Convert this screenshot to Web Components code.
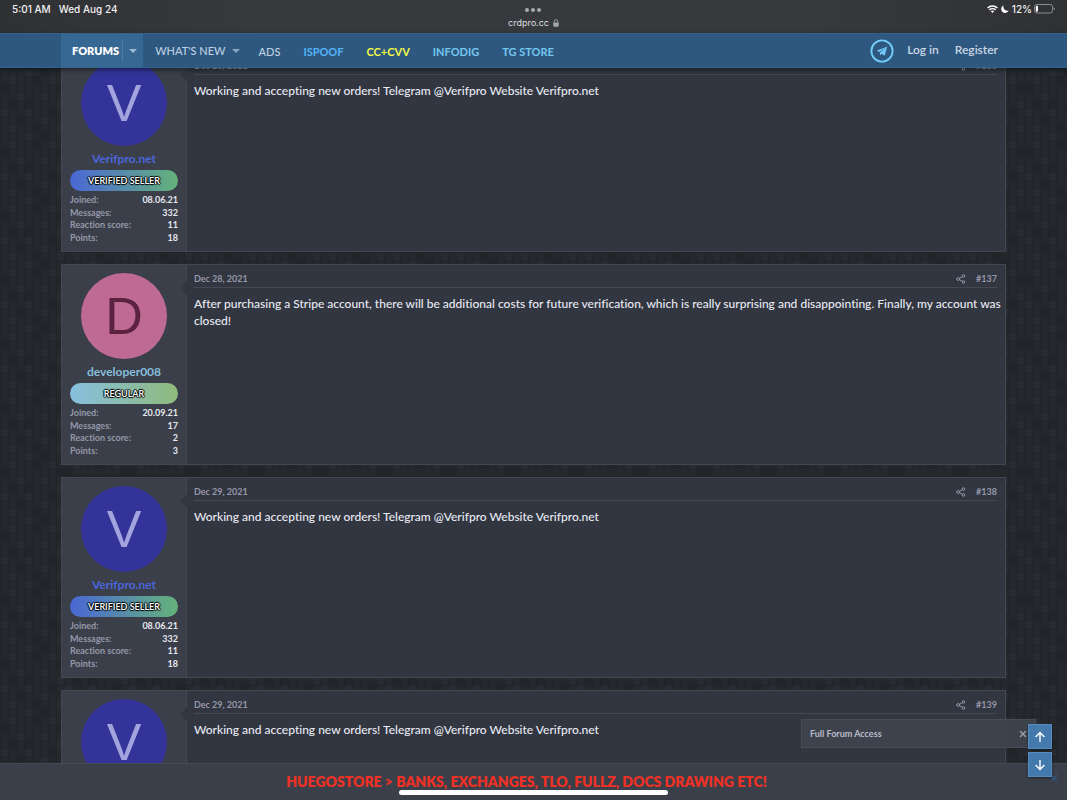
<!DOCTYPE html>
<html lang="en">
<head>
<meta charset="utf-8">
<meta name="viewport" content="width=device-width, initial-scale=1">
<title>Forum thread</title>
<style>
  html, body { margin: 0; height: 100%; }
  body { font-family: Lato, "Open Sans", sans-serif; font-variant-ligatures: none; background: #23272c; color: #e1e3ee; overflow: hidden; }
</style>
</head>
<body>
<forum-app></forum-app>

<script>
const define = (name, html, setup) => {
  const tpl = document.createElement('template');
  tpl.innerHTML = html;
  customElements.define(name, class extends HTMLElement {
    constructor() {
      super();
      this.attachShadow({ mode: 'open' }).append(tpl.content.cloneNode(true));
    }
    connectedCallback() { if (setup) setup(this, this.shadowRoot); }
  });
};

define('status-bar', `
<style>
  :host { display: grid; grid-template-columns: 1fr auto 1fr; height: 33px; box-sizing: border-box; padding: 0 12px;
    background: linear-gradient(90deg, #303133, #38393d 25%, #38393d 75%, #303133); color: #f1f1f2;
    font: 500 10px/18px Inter, sans-serif; }
  .left, .right { display: flex; align-items: center; height: 18px; }
  .left { gap: 8px; }
  .right { justify-content: flex-end; gap: 3px; }
  .right span { margin-right: -1px; }
  .mid { display: flex; flex-direction: column; align-items: center; gap: 5px; padding-top: 8px; }
  .dots { display: flex; gap: 2px; }
  .dots i { width: 4px; height: 4px; border-radius: 50%; background: #a9aaac; }
  .url { display: flex; align-items: center; gap: 4px; font-size: 9px; font-weight: 400; line-height: 11px; color: #dedfe1; }
  svg { display: block; }
</style>
<div class="left"><span>5:01 AM</span><span>Wed Aug 24</span></div>
<div class="mid">
  <div class="dots"><i></i><i></i><i></i></div>
  <div class="url"><span>crdpro.cc</span>
    <svg width="6" height="8" viewBox="0 0 6 8"><path d="M1.3 4V2.4a1.7 1.7 0 0 1 3.4 0V4" fill="none" stroke="#98999c"/><rect x="0.3" y="3.4" width="5.4" height="4.4" rx="0.8" fill="#a4a5a8"/></svg>
  </div>
</div>
<div class="right">
  <svg width="11" height="8" viewBox="0 0 11 8" fill="none" stroke="#fff" stroke-width="1.5"><path d="M0.6 3a7 7 0 0 1 9.8 0M2.4 4.9a4.5 4.5 0 0 1 6.2 0"/><path d="M5.5 7.9 3.9 6.3a2.3 2.3 0 0 1 3.2 0z" fill="#fff" stroke="none"/></svg>
  <svg width="8" height="8" viewBox="0 0 8 8"><path d="M2.6.2A4 4 0 1 0 7.8 5.6 4.2 4.2 0 0 1 2.6.2z" fill="#fff"/></svg>
  <span>12%</span>
  <svg width="21" height="10" viewBox="0 0 21 10"><rect x="0.5" y="0.5" width="18" height="8.5" rx="2.4" fill="none" stroke="#8b8c8f"/><rect x="1.8" y="1.8" width="2.2" height="6" rx="1" fill="#fff"/><path d="M19.6 3.3q1.3.5 1.3 1.5t-1.3 1.5z" fill="#8b8c8f"/></svg>
</div>`);

define('nav-tab', `
<style>
  :host { display: flex; align-items: stretch; }
  a { display: flex; align-items: center; color: var(--tab-color, #bfd0e0); text-decoration: none;
      font-size: 11px; font-weight: var(--tab-weight, 700); line-height: 16px; white-space: nowrap; }
  button { display: none; align-items: center; justify-content: center; border: 0; padding: 0; background: none; color: #84a6c1; }
  :host([menu]) button { display: flex; width: 21px; }
  :host([active]) a { padding-right: 3px; }
  :host([active]) { background: #376793; padding-left: 11px; }
  :host([active]) button { box-shadow: inset 1px 0 #4f7ba3; margin: 5px 0; color: #9dbbd3; }
</style>
<a href="#"><slot></slot></a>
<button type="button" aria-label="Open menu"><svg width="8" height="4" viewBox="0 0 8 4"><path d="M0 0h8L4 4z" fill="currentColor"/></svg></button>`);

define('site-nav', `
<style>
  :host { display: flex; height: 35px; box-sizing: border-box; padding: 0 69px 0 61px; background: #2e5880;
    border-top: 1px solid #33628f; border-bottom: 1px solid #34628c; box-shadow: 0 2px 5px rgba(0,0,0,.45); position: relative; z-index: 1; }
  nav { display: flex; }
  .main { gap: 12px; }
  .extra { gap: 23px; padding: 2px 0 0 12px; }
  .user { margin-left: auto; gap: 16px; }
  .user a { display: flex; align-items: center; color: #c9d7e4; text-decoration: none; font-size: 12px; font-weight: 600; padding-bottom: 3px; }
  .user a.tg { padding: 0; margin-right: -3px; }
  .plain { --tab-weight: 500; }
  .blue { --tab-color: #53b5f7; }
  .yellow { --tab-color: #f3f943; }
  .cyan { --tab-color: #74c8f0; }
  .act { --tab-color: #fff; --tab-weight: 800; }
</style>
<nav class="main" aria-label="Main">
  <nav-tab class="act" active menu>FORUMS</nav-tab>
  <nav-tab class="plain" menu>WHAT'S NEW</nav-tab>
</nav>
<nav class="extra" aria-label="Partners">
  <nav-tab class="plain">ADS</nav-tab>
  <nav-tab class="blue">ISPOOF</nav-tab>
  <nav-tab class="yellow">CC+CVV</nav-tab>
  <nav-tab class="cyan">INFODIG</nav-tab>
  <nav-tab class="cyan">TG STORE</nav-tab>
</nav>
<nav class="user" aria-label="Account">
  <a class="tg" href="#" aria-label="Telegram"><svg width="24" height="24" viewBox="0 0 24 24"><circle cx="12" cy="12" r="10.6" fill="none" stroke="#70cbf7" stroke-width="1.9"/><path d="M17.3 7.5 6.6 11.7l2.7 1.3zM17.3 7.5l-7.4 6 .1 3 1.6-1.8 3 2z" fill="#70cbf7"/></svg></a>
  <a href="#">Log in</a>
  <a href="#">Register</a>
</nav>`);

define('user-avatar', `
<style>
  :host { display: flex; align-items: center; justify-content: center; width: 86px; height: 86px; border-radius: 50%;
    background: var(--avatar-bg, #333399); color: var(--avatar-fg, #a3a3dd);
    font: 400 52px/86px "Liberation Sans", Arial, sans-serif; }
</style>
<slot></slot>`);

define('rank-badge', `
<style>
  :host { display: block; width: 100%; height: 21px; border-radius: 11px; text-align: center;
    background: linear-gradient(90deg, var(--rank-from, #4a67d6), var(--rank-to, #64b27b));
    font-size: 9px; font-weight: 600; line-height: 21px; color: #fff;
    text-shadow: 1px 0 1px #000, -1px 0 1px #000, 0 1px 1px #000, 0 -1px 1px #000; }
</style>
<slot></slot>`);

define('forum-post', `
<style>
  :host { display: grid; grid-template-columns: 125px 1fr; box-sizing: border-box; min-height: 201px; flex: none;
    border: 1px solid #434751; background: #323640; }
  aside { display: flex; flex-direction: column; align-items: center; background: #3b3f49; border-right: 1px solid #454954;
    padding: 8px 8px 0; position: relative; }
  aside::after { content: ""; position: absolute; right: -1px; top: 16px; width: 6px; height: 14px; background: #323640;
    clip-path: polygon(0 50%, 100% 0, 100% 100%); }
  .name { margin-top: 5px; font-size: 12px; font-weight: 700; line-height: 15px; text-decoration: none; color: var(--name-color, #4a66dc); }
  rank-badge { margin-top: 4px; }
  dl { display: grid; grid-template-columns: auto auto; grid-auto-rows: 1fr; align-items: center; width: 100%; height: 50px;
    margin: 3px 0 0; font-size: 9px; line-height: 12px; }
  dt { color: #9598aa; font-weight: 700; }
  dd { margin: 0; text-align: right; color: #e6e8f0; font-weight: 700; }
  article { padding: 7px 0 0 7px; }
  header { display: flex; align-items: flex-start; gap: 10px; height: 15px; margin-right: 8px; border-bottom: 1px solid #454954; color: #9598aa;
    font-size: 9px; font-weight: 700; line-height: 14px; }
  header a { color: inherit; text-decoration: none; display: flex; }
  header .share { margin: 2px 0 0 auto; }
  p { margin: 7px 0 0; font-size: 12px; line-height: 17px; font-weight: 500; color: #e8eaf4; }
</style>
<aside>
  <user-avatar></user-avatar>
  <a class="name" href="#"></a>
  <rank-badge></rank-badge>
  <dl>
    <dt>Joined:</dt><dd data-k="joined"></dd>
    <dt>Messages:</dt><dd data-k="messages"></dd>
    <dt>Reaction score:</dt><dd data-k="reactions"></dd>
    <dt>Points:</dt><dd data-k="points"></dd>
  </dl>
</aside>
<article>
  <header>
    <a href="#"><time></time></a>
    <a class="share" href="#" aria-label="Share"><svg width="10" height="10" viewBox="0 0 10 10" fill="none" stroke="#9598aa"><circle cx="2.2" cy="5" r="1.4"/><circle cx="7.5" cy="2" r="1.3"/><circle cx="7.5" cy="8" r="1.3"/><path d="M3.4 4.3 6.4 2.7M3.4 5.7l3 1.6"/></svg></a>
    <a class="num" href="#"></a>
  </header>
  <p><slot></slot></p>
</article>`, (el, root) => {
  const d = el.dataset;
  root.querySelector('user-avatar').textContent = d.user[0].toUpperCase();
  root.querySelector('.name').textContent = d.user;
  root.querySelector('rank-badge').textContent = d.rank;
  root.querySelector('time').textContent = d.date;
  root.querySelector('.num').textContent = d.num;
  root.querySelectorAll('dd').forEach(n => { n.textContent = d[n.dataset.k]; });
});

define('access-notice', `
<style>
  :host { display: flex; align-items: center; justify-content: space-between; box-sizing: border-box; width: 235px; height: 29px;
    padding: 0 8px; border: 1px solid #484c57; background: rgba(63,67,77,.94); color: #b9bccb; font-size: 9px; font-weight: 700; }
  button { border: 0; padding: 0; background: none; display: flex; }
</style>
<slot></slot>
<button type="button" aria-label="Dismiss"><svg width="8" height="8" viewBox="0 0 8 8"><path d="M1 1l6 6M7 1 1 7" stroke="#a3a6b3" stroke-width="1.3"/></svg></button>`);

define('scroll-buttons', `
<style>
  :host { display: flex; flex-direction: column; gap: 3px; }
  button { display: flex; align-items: center; justify-content: center; width: 24px; height: 25px; padding: 0;
    border: 1px solid #558bbd; background: #4479ae; box-shadow: 0 1px 2px rgba(0,0,0,.5); }
</style>
<button type="button" aria-label="Scroll to top"><svg width="12" height="12" viewBox="0 0 12 12" fill="none" stroke="#fff" stroke-width="1.4"><path d="M6 11V1.6M1.6 6 6 1.5 10.4 6"/></svg></button>
<button type="button" aria-label="Scroll to bottom"><svg width="12" height="12" viewBox="0 0 12 12" fill="none" stroke="#fff" stroke-width="1.4"><path d="M6 1v9.4M1.6 6 6 10.5 10.4 6"/></svg></button>`);

define('promo-bar', `
<style>
  :host { display: flex; align-items: center; justify-content: center; height: 37px; box-sizing: border-box; position: relative;
    background: #3b3f49; border-top: 1px solid #454954; }
  a { color: #ee3124; font-size: 14px; font-weight: 800; line-height: 18px; text-decoration: none; padding: 0 14px 0 0; white-space: nowrap; }
  button { position: absolute; right: 9px; top: 10px; border: 0; padding: 0; background: none; display: flex; }
  i { position: absolute; left: 50%; bottom: 5px; width: 269px; height: 5px; margin-left: -135px; border-radius: 3px; background: #fff; }
</style>
<a href="#"><slot></slot></a>
<button type="button" aria-label="Close"><svg width="8" height="8" viewBox="0 0 8 8"><path d="M1 1l6 6M7 1 1 7" stroke="#315b83" stroke-width="1.2"/></svg></button>
<i></i>`);

/* Mosaic tile: an 8px grid with a few lighter and darker cells. */
const mosaic = "url(\"data:image/svg+xml,%3Csvg xmlns='http://www.w3.org/2000/svg' width='64' height='64'%3E%3Cpath fill='%23292d33' d='M8 8h8v8H8zM24 0h8v8h-8zM48 8h8v8h-8zM16 24h8v8h-8zM40 24h8v8h-8zM56 32h8v8h-8zM0 40h8v8H0zM24 40h8v8h-8zM40 48h8v8h-8zM8 56h8v8H8zM56 56h8v8h-8z'/%3E%3Cpath fill='%23212529' d='M0 16h8v8H0zM32 8h8v8h-8zM56 16h8v8h-8zM24 32h8v8h-8zM8 32h8v8H8zM48 40h8v8h-8zM16 48h8v8h-8zM32 56h8v8h-8zM40 0h8v8h-8z'/%3E%3Cpath stroke='%231f2327' stroke-opacity='.7' d='M0 .5h64M0 8.5h64M0 16.5h64M0 24.5h64M0 32.5h64M0 40.5h64M0 48.5h64M0 56.5h64M.5 0v64M8.5 0v64M16.5 0v64M24.5 0v64M32.5 0v64M40.5 0v64M48.5 0v64M56.5 0v64'/%3E%3C/svg%3E\")";

define('forum-app', `
<style>
  :host { display: flex; flex-direction: column; height: 100vh; position: relative; }
  main { flex: 1; min-height: 0; overflow: hidden; padding: 0 61px; display: flex; flex-direction: column; gap: 12px;
    background: #25292e ${mosaic}; }
  main > :first-child { margin-top: -17px; }
  .regular { --avatar-bg: #bf6a95; --avatar-fg: #5b2340; --name-color: #86bddb; --rank-from: #87bfdf; --rank-to: #8fba7c; }
  access-notice { position: absolute; right: 31px; bottom: 52px; }
  scroll-buttons { position: absolute; right: 15px; bottom: 23px; z-index: 2; }
</style>
<status-bar></status-bar>
<site-nav></site-nav>
<main>
  <forum-post data-user="Verifpro.net" data-rank="VERIFIED SELLER" data-joined="08.06.21" data-messages="332" data-reactions="11" data-points="18" data-date="Dec 28, 2021" data-num="#136">Working and accepting new orders! Telegram @Verifpro Website Verifpro.net</forum-post>
  <forum-post class="regular" data-user="developer008" data-rank="REGULAR" data-joined="20.09.21" data-messages="17" data-reactions="2" data-points="3" data-date="Dec 28, 2021" data-num="#137">After purchasing a Stripe account, there will be additional costs for future verification, which is really surprising and disappointing. Finally, my account was closed!</forum-post>
  <forum-post data-user="Verifpro.net" data-rank="VERIFIED SELLER" data-joined="08.06.21" data-messages="332" data-reactions="11" data-points="18" data-date="Dec 29, 2021" data-num="#138">Working and accepting new orders! Telegram @Verifpro Website Verifpro.net</forum-post>
  <forum-post data-user="Verifpro.net" data-rank="VERIFIED SELLER" data-joined="08.06.21" data-messages="332" data-reactions="11" data-points="18" data-date="Dec 29, 2021" data-num="#139">Working and accepting new orders! Telegram @Verifpro Website Verifpro.net</forum-post>
</main>
<promo-bar>HUEGOSTORE &gt; BANKS, EXCHANGES, TLO, FULLZ, DOCS DRAWING ETC!</promo-bar>
<access-notice>Full Forum Access</access-notice>
<scroll-buttons></scroll-buttons>`);
</script>
</body>
</html>
